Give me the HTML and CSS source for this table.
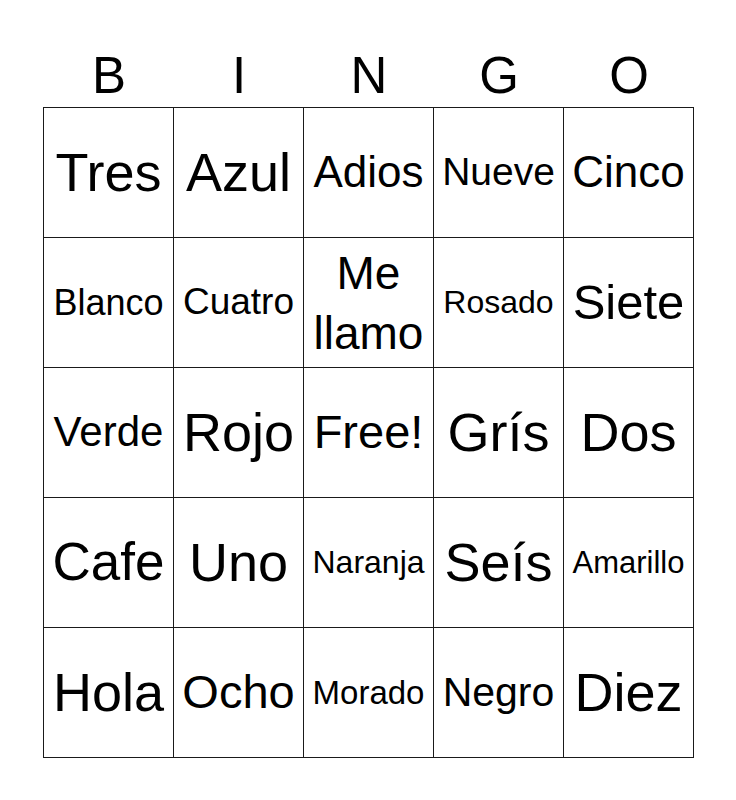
FILE: index.html
```html
<!DOCTYPE html>
<html lang="es">
<head>
<meta charset="utf-8">
<title>Bingo</title>
<link rel="stylesheet" href="styles.css">
</head>
<body>
<div class="card">
  <div class="head">
    <div>B</div><div>I</div><div>N</div><div>G</div><div>O</div>
  </div>
  <div class="grid">
    <div class="cell s54">Tres</div>
    <div class="cell s54">Azul</div>
    <div class="cell s44">Adios</div>
    <div class="cell s39">Nueve</div>
    <div class="cell s44">Cinco</div>

    <div class="cell s36">Blanco</div>
    <div class="cell s37">Cuatro</div>
    <div class="cell s46 two">Me<br>llamo</div>
    <div class="cell s32">Rosado</div>
    <div class="cell s49">Siete</div>

    <div class="cell s42">Verde</div>
    <div class="cell s54">Rojo</div>
    <div class="cell s47">Free!</div>
    <div class="cell s54">Grís</div>
    <div class="cell s54">Dos</div>

    <div class="cell s53">Cafe</div>
    <div class="cell s54">Uno</div>
    <div class="cell s32">Naranja</div>
    <div class="cell s54">Seís</div>
    <div class="cell s31">Amarillo</div>

    <div class="cell s54">Hola</div>
    <div class="cell s47">Ocho</div>
    <div class="cell s33">Morado</div>
    <div class="cell s41">Negro</div>
    <div class="cell s54">Diez</div>
  </div>
</div>
</body>
</html>
```
FILE: styles.css
```css
html, body {
  margin: 0;
  padding: 0;
  background: #fff;
}
body {
  font-family: "Liberation Sans", Arial, sans-serif;
  color: #000;
}
.card {
  width: 651px;
  margin-left: 43px;
  padding-top: 46px;
}
.head {
  display: grid;
  grid-template-columns: repeat(5, 130px);
  padding-left: 1px;
  height: 60px;
  margin-bottom: 1px;
  font-size: 51px;
  line-height: 60px;
  text-align: center;
}
.grid {
  display: grid;
  grid-template-columns: repeat(5, 130px);
  grid-auto-rows: 130px;
  border-left: 1px solid #1a1a1a;
  border-top: 1px solid #1a1a1a;
  width: 650px;
}
.cell {
  box-sizing: border-box;
  border-right: 1px solid #1a1a1a;
  border-bottom: 1px solid #1a1a1a;
  display: flex;
  align-items: center;
  justify-content: center;
  text-align: center;
  white-space: nowrap;
  line-height: 1.15;
}
.two { line-height: 60px; }
.s54 { font-size: 54px; }
.s53 { font-size: 53px; }
.s49 { font-size: 49px; }
.s47 { font-size: 47px; }
.s46 { font-size: 46px; }
.s44 { font-size: 44px; }
.s42 { font-size: 42px; }
.s41 { font-size: 41px; }
.s39 { font-size: 39px; }
.s37 { font-size: 37px; }
.s36 { font-size: 36px; }
.s33 { font-size: 33px; }
.s32 { font-size: 32px; }
.s31 { font-size: 31px; }
```
